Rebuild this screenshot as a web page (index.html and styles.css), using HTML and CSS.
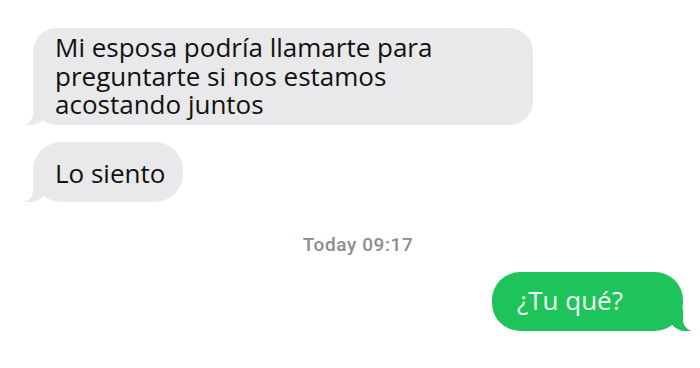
FILE: index.html
```html
<!DOCTYPE html>
<html>
<head>
<meta charset="utf-8">
<link rel="stylesheet" href="styles.css">
</head>
<body>
<div class="chat">
  <div class="bubble in first">
    <div class="line">Mi esposa podría llamarte para</div>
    <div class="line">preguntarte si nos estamos</div>
    <div class="line">acostando juntos</div>
  </div>
  <div class="bubble in second"><div class="line">Lo siento</div></div>
  <div class="stamp"><span class="day">Today</span> 09:17</div>
  <div class="bubble out"><div class="line">¿Tu qué?</div></div>
</div>
</body>
</html>
```

FILE: styles.css
```css
html, body {
  margin: 0;
  padding: 0;
  background: #ffffff;
}
.chat {
  width: 700px;
  height: 368px;
  box-sizing: border-box;
  padding: 28px 0 0 0;
  display: flex;
  flex-direction: column;
  align-items: flex-start;
  font-family: "Open Sans", "Noto Sans", sans-serif;
  overflow: hidden;
}
.bubble {
  position: relative;
  font-size: 26px;
  color: #111111;
  box-sizing: border-box;
}
.line {
  height: 28.5px;
  line-height: 28.5px;
  white-space: nowrap;
}
.in {
  background: #e9e9eb;
  margin-left: 33px;
  padding-left: 22px;
}
.in::before {
  content: "";
  position: absolute;
  bottom: 0;
  left: -8px;
  width: 22px;
  height: 22px;
  background: #e9e9eb;
  border-bottom-right-radius: 16px;
}
.in::after {
  content: "";
  position: absolute;
  bottom: 0;
  left: -11px;
  width: 11px;
  height: 22px;
  background: #ffffff;
  border-bottom-right-radius: 11px;
}
.first {
  width: 500px;
  height: 97px;
  padding-top: 5px;
  border-radius: 24px;
}
.second {
  margin-top: 17px;
  width: 150px;
  height: 60px;
  padding-top: 17px;
  border-radius: 28px;
}
.stamp {
  align-self: center;
  margin-top: 31px;
  margin-left: 16px;
  font-family: Roboto, "Liberation Sans", Arial, sans-serif;
  font-size: 19px;
  font-weight: 500;
  color: #8c8c90;
  letter-spacing: 0.6px;
}
.out {
  align-self: flex-end;
  margin-top: 16px;
  margin-right: 17px;
  width: 191px;
  height: 59px;
  padding: 14px 0 0 25px;
  border-radius: 28px;
  background: #1ec45b;
  color: #f2fff6;
}
.out::before {
  content: "";
  position: absolute;
  bottom: 0;
  right: -8px;
  width: 22px;
  height: 22px;
  background: #1ec45b;
  border-bottom-left-radius: 16px;
}
.out::after {
  content: "";
  position: absolute;
  bottom: 0;
  right: -11px;
  width: 11px;
  height: 22px;
  background: #ffffff;
  border-bottom-left-radius: 11px;
}
```
